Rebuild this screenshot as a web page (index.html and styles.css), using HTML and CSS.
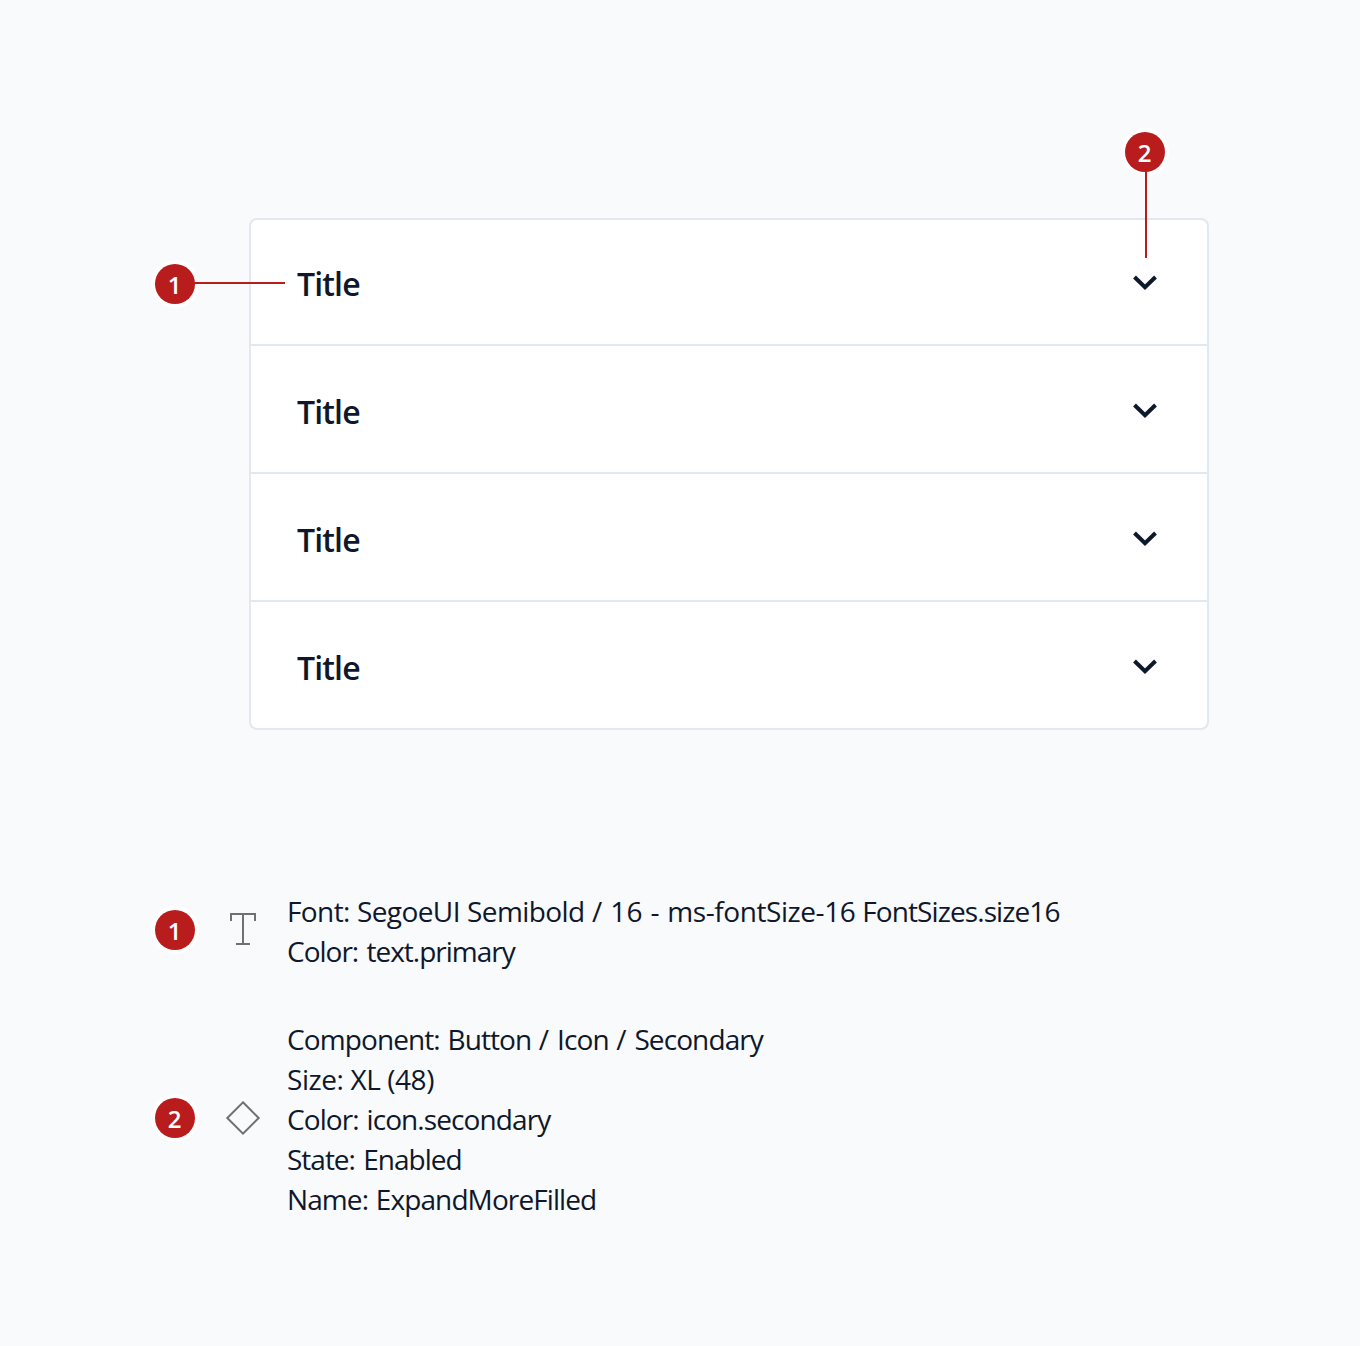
FILE: index.html
```html
<!DOCTYPE html>
<html lang="en">
<head>
<meta charset="utf-8">
<title>Accordion anatomy</title>
<link rel="stylesheet" href="styles.css">
</head>
<body>
<svg class="sprite" aria-hidden="true">
  <symbol id="chevron" viewBox="0 0 24 16"><path d="M1.5 2 12 12.3 22.5 2" fill="none" stroke="currentColor" stroke-width="4"/></symbol>
</svg>
<main class="page">
  <section class="accordion">
    <div class="row"><span class="title">Title</span><svg class="chevron"><use href="#chevron"/></svg></div>
    <div class="row"><span class="title">Title</span><svg class="chevron"><use href="#chevron"/></svg></div>
    <div class="row"><span class="title">Title</span><svg class="chevron"><use href="#chevron"/></svg></div>
    <div class="row"><span class="title">Title</span><svg class="chevron"><use href="#chevron"/></svg></div>
    <div class="callout callout-title"><span class="badge">1</span></div>
    <div class="callout callout-icon"><span class="badge">2</span></div>
  </section>
  <section class="legend">
    <div class="entry">
      <span class="badge">1</span>
      <svg class="glyph" viewBox="0 0 36 36" fill="none" stroke="#707070" stroke-width="2"><path d="M6 9V2h24v7M18 2v30M11 32h14"/></svg>
      <div class="details">
        <p><span class="snug">Font: SegoeUI Semibold</span><span class="open"> / 16 - </span><span class="loose">ms-fontSize-16 </span><span class="tight">FontSizes.size16</span></p>
        <p class="tighter">Color: text.primary</p>
      </div>
    </div>
    <div class="entry">
      <span class="badge">2</span>
      <svg class="glyph" viewBox="0 0 36 36" fill="none" stroke="#707070" stroke-width="2"><path d="M18 2.3 33.7 18 18 33.7 2.3 18Z"/></svg>
      <div class="details">
        <p><span class="tight">Component: Button</span><span class="open"> / </span><span class="tight">Icon</span><span class="open"> / </span><span class="tight">Secondary</span></p>
        <p class="loose">Size: XL (48)</p>
        <p class="tight">Color: icon.secondary</p>
        <p class="tighter">State: Enabled</p>
        <p class="tight">Name: ExpandMoreFilled</p>
      </div>
    </div>
  </section>
</main>
</body>
</html>
```
FILE: styles.css
```css
* { box-sizing: border-box; }
body {
  margin: 0;
  background: #f9fafc;
  color: #0f172a;
  font-family: "Segoe UI", "Open Sans", sans-serif;
}
.sprite { position: absolute; width: 0; height: 0; }
.page {
  width: 1360px;
  height: 1346px;
  padding: 218px 151px 0 155px;
}
.accordion {
  position: relative;
  width: 960px;
  height: 512px;
  margin-left: 94px;
  border: 2px solid #e2e8f0;
  border-radius: 8px;
  background: #fff;
}
.row {
  display: flex;
  align-items: center;
  justify-content: space-between;
  height: 128px;
  padding: 2px 50px 0 46px;
  border-bottom: 2px solid #e2e8f0;
}
.row:first-child { height: 126px; padding-top: 0; }
.row:nth-child(4) { height: 126px; border-bottom: 0; }
.title {
  font-size: 32px;
  line-height: 40px;
  font-weight: 600;
  letter-spacing: -0.85px;
  padding-top: 4px;
}
.chevron { width: 24px; height: 16px; margin-top: 1px; }
.badge {
  display: block;
  flex: none;
  width: 40px;
  height: 40px;
  padding-right: 1px;
  border-radius: 50%;
  background: #b91c1c;
  box-shadow: 0 0 0 4px #fff;
  color: #fff;
  font-size: 24px;
  line-height: 42px;
  font-weight: 600;
  text-align: center;
}
.callout { position: absolute; }
.callout::after {
  content: "";
  position: absolute;
  background: #b91c1c;
}
.callout-title { left: -96px; top: 44px; }
.callout-title::after { left: 39px; top: 18px; width: 91px; height: 2px; }
.callout-icon { left: 874px; top: -88px; }
.callout-icon::after { left: 20px; top: 39px; width: 2px; height: 87px; }
.legend {
  display: flex;
  flex-direction: column;
  gap: 48px;
  margin-top: 162px;
}
.entry { display: flex; align-items: center; }
.entry .badge { margin-top: -4px; }
.glyph { flex: none; width: 36px; height: 36px; margin: -4px 26px 0 30px; }
.details {
  margin: -1px 0 1px;
  font-size: 28px;
  line-height: 40px;
  white-space: nowrap;
}
.details p { margin: 0; }
.open { letter-spacing: 0.3px; }
.loose { letter-spacing: -0.42px; }
.snug { letter-spacing: -0.6px; word-spacing: 0.5px; }
.tight { letter-spacing: -0.9px; word-spacing: 1.3px; }
.tighter { letter-spacing: -1px; word-spacing: 2px; }
```
